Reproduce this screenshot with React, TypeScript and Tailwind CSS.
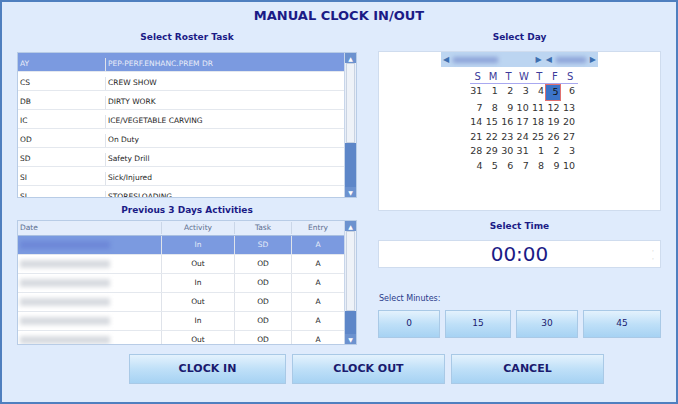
import React from "react";

const tasks = [
  ["AY", "PEP-PERF.ENHANC.PREM DR"],
  ["CS", "CREW SHOW"],
  ["DB", "DIRTY WORK"],
  ["IC", "ICE/VEGETABLE CARVING"],
  ["OD", "On Duty"],
  ["SD", "Safety Drill"],
  ["SI", "Sick/Injured"],
  ["SL", "STORESLOADING"],
];
const acts = [
  ["In", "SD"], ["Out", "OD"], ["In", "OD"], ["Out", "OD"], ["In", "OD"], ["Out", "OD"],
];
const days = [
  [31,1,2,3,4,5,6],[7,8,9,10,11,12,13],[14,15,16,17,18,19,20],[21,22,23,24,25,26,27],[28,29,30,31,1,2,3],[4,5,6,7,8,9,10],
];

function ScrollBar() {
  return (
    <div className="w-[12px] flex flex-col bg-[#e8eef8] border-l border-[#c8d6ea]">
      <div className="h-[10px] bg-[#6c92cf] flex items-center justify-center text-white text-[6px]">▲</div>
      <div className="h-[80px] bg-[#eef2f8] border border-[#c9d3e2] mx-[1px]" />
      <div className="flex-1 bg-[#5d86c8]" />
      <div className="h-[10px] bg-[#6c92cf] flex items-center justify-center text-white text-[6px]">▼</div>
    </div>
  );
}

function Btn({ children, cls }: { children: React.ReactNode; cls: string }) {
  return (
    <div className={`flex items-center justify-center bg-gradient-to-b from-[#e4f2fd] via-[#bfe0f8] to-[#a6d2f3] border border-[#a9c9e6] text-[#1a1a6e] ${cls}`}>
      {children}
    </div>
  );
}

export default function App() {
  return (
    <div className="w-[678px] h-[404px] bg-[#dfebfc] border-2 border-[#4f7fbf] relative text-[#1e1e1e]" style={{ fontFamily: "Tahoma, 'DejaVu Sans', sans-serif" }}>
      <div className="absolute left-0 right-0 top-[4px] text-center text-[13px] font-bold text-[#1b1b86]">MANUAL CLOCK IN/OUT</div>
      <div className="flex pt-[28px] pl-[15px] gap-[21px]">
        <div className="w-[340px] flex flex-col">
          <div className="text-center text-[9px] font-bold text-[#1b1b86] h-[22px] leading-[14px]">Select Roster Task</div>
          <div className="h-[146px] bg-white border border-[#b8cce6] flex text-[7.5px]">
            <div className="flex-1 overflow-hidden">
              {tasks.map(([c, d], i) => (
                <div key={i} className={`h-[19px] shrink-0 flex items-start pt-[5px] border-b border-[#e4e8ee] ${i === 0 ? "bg-[#7b9ae0] text-[#e8ecf8]" : ""}`}>
                  <div className="w-[88px] pl-[2px] h-full border-r border-[#dfe3ea]">{c}</div>
                  <div className="pl-[2px]">{d}</div>
                </div>
              ))}
            </div>
            <ScrollBar />
          </div>
          <div className="text-center text-[9px] font-bold text-[#1b1b86] h-[22px] leading-[24px]">Previous 3 Days Activities</div>
          <div className="h-[125px] bg-white border border-[#b8cce6] flex text-[7.5px]">
            <div className="flex-1 overflow-hidden">
              <div className="h-[15px] flex items-center bg-[#e4edfb] border-b border-[#a9bfe0] text-[#5d6f90]">
                <div className="w-[143px] pl-[2px]">Date</div>
                <div className="w-[73px] text-center border-l border-[#cad6e8]">Activity</div>
                <div className="w-[57px] text-center border-l border-[#cad6e8]">Task</div>
                <div className="flex-1 text-center border-l border-[#cad6e8]">Entry</div>
              </div>
              {acts.map(([a, t], i) => (
                <div key={i} className={`h-[19px] flex items-center border-b border-[#e4e8ee] ${i === 0 ? "bg-[#7b9ae0] text-[#e8ecf8]" : ""}`}>
                  <div className="w-[143px] h-full flex items-center">
                    <div className={`w-[90px] h-[8px] ml-[2px] blur-[2px] ${i === 0 ? "bg-[#6e88d8]" : "bg-[#d8dbe0]"}`} />
                  </div>
                  <div className="w-[73px] text-center h-full flex items-center justify-center border-l border-[#dfe3ea]">{a}</div>
                  <div className="w-[57px] text-center h-full flex items-center justify-center border-l border-[#dfe3ea]">{t}</div>
                  <div className="flex-1 text-center h-full flex items-center justify-center border-l border-[#dfe3ea]">A</div>
                </div>
              ))}
            </div>
            <ScrollBar />
          </div>
        </div>
        <div className="w-[283px] flex flex-col">
          <div className="text-center text-[9px] font-bold text-[#1b1b86] h-[21px] leading-[14px]">Select Day</div>
          <div className="h-[160px] bg-white border border-[#cfdcee] flex flex-col items-center">
            <div className="w-[157px] h-[15px] bg-[#bcd5f1] flex items-center text-[#3d6fb0] text-[8px] px-[2px] gap-[4px]">
              <span>◀</span><div className="w-[45px] h-[6px] bg-[#8da3d8] blur-[2px]" /><div className="flex-1" /><span>▶</span><span>◀</span>
              <div className="w-[30px] h-[6px] bg-[#8da3d8] blur-[2px]" /><span>▶</span>
            </div>
            <div className="w-[108px] mt-[3px] ml-[9px] grid grid-cols-7 text-[10px] text-[#3b3b9a] border-b border-[#a8a8f0] leading-[13px]">
              {["S","M","T","W","T","F","S"].map((d, i) => <div key={i} className="text-center">{d}</div>)}
            </div>
            <div className="w-[108px] ml-[5px] grid grid-cols-7 text-[9.5px] text-[#333] leading-[14.5px]">
              {days.flat().map((d, i) => (
                <div key={i} className={`text-right pr-[1px] ${i === 5 ? "bg-[#3c74c8] border border-[#e07070] text-[#111]" : ""}`}>{d}</div>
              ))}
            </div>
          </div>
          <div className="text-center text-[9px] font-bold text-[#1b1b86] h-[29px] leading-[30px]">Select Time</div>
          <div className="h-[28px] bg-white border border-[#cfdcee] flex items-center justify-center relative text-[20px] text-[#1b1b86]">
            00:00
            <div className="absolute right-[6px] top-[6px] text-[6px] text-[#999] leading-[8px]">·<br />·</div>
          </div>
          <div className="text-[8px] text-[#2a3a8a] h-[42px] pt-[25px] pl-[1px]">Select Minutes:</div>
          <div className="flex gap-[5px] text-[9px]">
            <Btn cls="w-[62px] h-[28px]">0</Btn>
            <Btn cls="w-[66px] h-[28px]">15</Btn>
            <Btn cls="w-[62px] h-[28px]">30</Btn>
            <Btn cls="flex-1 h-[28px]">45</Btn>
          </div>
        </div>
      </div>
      <div className="flex gap-[6px] pl-[127px] mt-[9px] text-[11px] font-bold">
        <Btn cls="w-[157px] h-[30px]">CLOCK IN</Btn>
        <Btn cls="w-[153px] h-[30px]">CLOCK OUT</Btn>
        <Btn cls="w-[153px] h-[30px]">CANCEL</Btn>
      </div>
    </div>
  );
}
